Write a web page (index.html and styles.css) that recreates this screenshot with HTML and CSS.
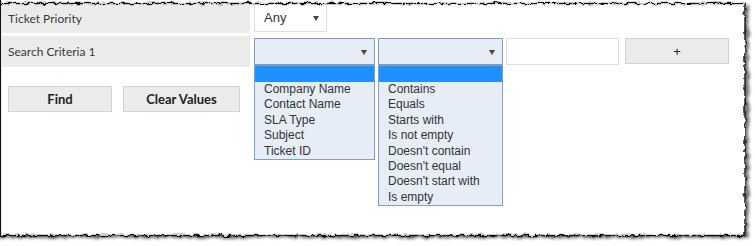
FILE: index.html
```html
<!doctype html>
<html lang="en">

<head>
    <meta charset="UTF-8" />
    <meta name="viewport" content="width=device-width, initial-scale=1.0" />
    <title>Ticket Search</title>
    <link rel="stylesheet" href="styles.css">
</head>

<body>
    <div class="page">
        <form class="search-form">
            <div class="form-row priority-row">
                <div class="form-label">Ticket Priority</div>
                <div class="form-field">
                    <div class="select select-plain">
                        <span class="select-value">Any</span>
                        <span class="arrow"></span>
                    </div>
                </div>
            </div>

            <div class="form-row criteria-row">
                <div class="form-label">Search Criteria 1</div>
                <div class="form-field">
                    <div class="select-wrap field-name">
                        <div class="select select-open"><span class="arrow"></span></div>
                        <ul class="dropdown">
                            <li class="selected"></li>
                            <li>Company Name</li>
                            <li>Contact Name</li>
                            <li>SLA Type</li>
                            <li>Subject</li>
                            <li>Ticket ID</li>
                        </ul>
                    </div>
                    <div class="select-wrap field-op">
                        <div class="select select-open"><span class="arrow"></span></div>
                        <ul class="dropdown">
                            <li class="selected"></li>
                            <li>Contains</li>
                            <li>Equals</li>
                            <li>Starts with</li>
                            <li>Is not empty</li>
                            <li>Doesn't contain</li>
                            <li>Doesn't equal</li>
                            <li>Doesn't start with</li>
                            <li>Is empty</li>
                        </ul>
                    </div>
                    <input class="text-input" type="text" />
                    <button class="btn btn-add" type="button">+</button>
                </div>
            </div>

            <div class="actions">
                <button class="btn btn-action btn-find" type="button">Find</button>
                <button class="btn btn-action btn-clear" type="button">Clear Values</button>
            </div>
        </form>

        <!-- torn paper edge round the capture -->
        <svg class="torn-frame" width="755" height="246" viewBox="0 0 755 246">
            <defs>
                <filter id="rough" filterUnits="userSpaceOnUse" x="-30" y="-20" width="810" height="290">
                    <feTurbulence type="fractalNoise" baseFrequency="0.17" numOctaves="3" seed="7" result="noise" />
                    <feDisplacementMap in="SourceGraphic" in2="noise" scale="5" xChannelSelector="R" yChannelSelector="G" />
                </filter>
                <filter id="soft" filterUnits="userSpaceOnUse" x="-30" y="-20" width="810" height="290">
                    <feTurbulence type="fractalNoise" baseFrequency="0.17" numOctaves="3" seed="7" result="noise" />
                    <feDisplacementMap in="SourceGraphic" in2="noise" scale="5" xChannelSelector="R" yChannelSelector="G" result="moved" />
                    <feGaussianBlur in="moved" stdDeviation="1.6" />
                </filter>
                <mask id="outside" maskUnits="userSpaceOnUse" x="0" y="0" width="755" height="246">
                    <rect width="755" height="246" fill="#fff" />
                    <rect x="-20" y="3.5" width="765" height="232" fill="#000" filter="url(#rough)" />
                </mask>
            </defs>
            <g mask="url(#outside)">
                <rect width="755" height="246" fill="#fff" />
                <rect x="-17" y="6" width="766" height="232" fill="#777" filter="url(#soft)" />
            </g>
            <rect x="-20" y="3.5" width="765" height="232" fill="none" stroke="#111" stroke-width="1.4"
                filter="url(#rough)" />
            <line x1="0.5" y1="0" x2="0.5" y2="236" stroke="#111" stroke-width="1.2" />
        </svg>
    </div>
</body>

</html>
```

FILE: styles.css
```css
:root {
    --label-bg: #ebebeb;
    --text-color: #333;
    --select-bg: #e6edf6;
    --select-border: #7b9cbb;
    --list-border: #7d9fd2;
    --highlight: #1e90ff;
}

* {
    margin: 0;
    padding: 0;
    box-sizing: border-box;
}

body {
    background-color: white;
    color: var(--text-color);
    font-family: Lato, "Open Sans", sans-serif;
}

.page {
    position: relative;
    width: 755px;
    height: 246px;
    overflow: hidden;
}

.search-form {
    padding: 3px 0 0 2px;
}

.form-row {
    display: flex;
    gap: 4px;
}

.priority-row {
    height: 30px;
}

.criteria-row {
    height: 31px;
    margin-top: 3px;
}

.form-label {
    width: 248px;
    background-color: var(--label-bg);
    font-size: 12px;
    padding-left: 6px;
    display: flex;
    align-items: center;
    color: #3a3a3a;
}

.form-field {
    display: flex;
    align-items: flex-start;
}

.select {
    position: relative;
    font-family: "Liberation Sans", Arial, sans-serif;
    font-size: 13px;
    color: #333;
}

.select-plain {
    width: 73px;
    height: 29px;
    border: 1px solid #dedede;
    background-color: white;
    padding-left: 9px;
    display: flex;
    align-items: center;
}

.arrow {
    position: absolute;
    right: 7px;
    top: 50%;
    margin-top: -2px;
    border-left: 3.5px solid transparent;
    border-right: 3.5px solid transparent;
    border-top: 5px solid #444;
}

.criteria-row .form-field {
    padding-top: 2px;
}

.select-wrap {
    position: relative;
    margin-right: 3px;
}

.field-name {
    width: 121px;
}

.field-op {
    width: 125px;
}

.select-open {
    height: 27px;
    border: 1px solid var(--select-border);
    background-color: var(--select-bg);
}

.dropdown {
    position: absolute;
    top: 27px;
    left: 0;
    width: 100%;
    list-style: none;
    background-color: var(--select-bg);
    border: 1px solid var(--list-border);
    border-top-color: #8a9fb3;
    font-family: "Liberation Sans", Arial, sans-serif;
    font-size: 12px;
    color: #333;
    z-index: 10;
}

.dropdown li {
    height: 15.4px;
    line-height: 15.4px;
    padding-left: 9px;
    white-space: nowrap;
}

.dropdown li.selected {
    height: 16px;
    background-color: var(--highlight);
}

.text-input {
    width: 113px;
    height: 27px;
    border: 1px solid #dedede;
    background-color: white;
    margin-right: 6px;
}

.btn {
    background-color: var(--label-bg);
    border: 1px solid #d2d2d2;
    color: #222;
    cursor: pointer;
}

.btn-add {
    width: 104px;
    height: 26px;
    font-family: "Liberation Sans", Arial, sans-serif;
    font-size: 13px;
}

.actions {
    display: flex;
    gap: 11px;
    margin-top: 19px;
    padding-left: 6px;
}

.btn-action {
    height: 26px;
    font-family: Lato, "Open Sans", sans-serif;
    font-size: 13px;
    font-weight: 700;
}

.btn-find {
    width: 104px;
}

.btn-clear {
    width: 117px;
}

.torn-frame {
    position: absolute;
    top: 0;
    left: 0;
    pointer-events: none;
}
```
